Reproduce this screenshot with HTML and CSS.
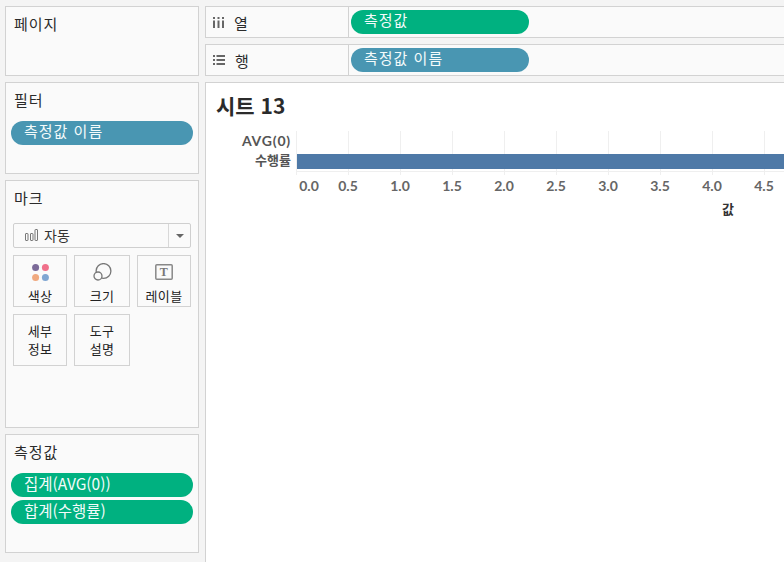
FILE: index.html
```html
<!DOCTYPE html>
<html lang="ko">
<head>
<meta charset="utf-8">
<title>시트 13</title>
<link rel="stylesheet" href="styles.css">
</head>
<body>
<div class="app">
  <aside class="side">
    <section class="card card-pages"><h2 class="card-title">페이지</h2></section>
    <section class="card card-filters">
      <h2 class="card-title">필터</h2>
      <div class="pill pill-blue pill-spaced">측정값 이름</div>
    </section>
    <section class="card card-marks">
      <h2 class="card-title">마크</h2>
      <div class="select">
        <div class="select-main">
          <svg class="select-icon" width="13" height="12" viewBox="0 0 13 12"><g fill="none" stroke="#777" stroke-width="1"><rect x="0.5" y="4.5" width="2.500" height="7" rx="0.500"/><rect x="5.500" y="4.500" width="2.500" height="7" rx="0.500"/><rect x="10" y="0.500" width="2.500" height="11" rx="0.500"/></g></svg>
          <span>자동</span>
        </div>
        <div class="select-arrow"><i class="caret"></i></div>
      </div>
      <div class="mark-grid">
        <div class="mark-btn">
          <svg class="mark-icon" width="17" height="17" viewBox="0 0 17 17"><circle cx="3.600" cy="3.600" r="3.500" fill="#7b6a98"/><circle cx="13.400" cy="3.600" r="3.500" fill="#f0708a"/><circle cx="3.600" cy="13.400" r="3.500" fill="#f0a97f"/><circle cx="13.400" cy="13.400" r="3.500" fill="#7fa6d2"/></svg>
          <span>색상</span>
        </div>
        <div class="mark-btn">
          <svg class="mark-icon mark-icon-size" width="19" height="18" viewBox="0 0 19 18"><g fill="none" stroke="#777" stroke-width="1.300"><circle cx="10.500" cy="8" r="7.400"/><circle cx="5" cy="13" r="4" fill="#fafafa"/></g></svg>
          <span>크기</span>
        </div>
        <div class="mark-btn">
          <svg class="mark-icon" width="18" height="16" viewBox="0 0 18 16"><rect x="0.800" y="0.800" width="16.400" height="14.400" rx="1" fill="none" stroke="#888" stroke-width="1.500"/><text class="t-glyph" x="9" y="12" text-anchor="middle">T</text></svg>
          <span>레이블</span>
        </div>
        <div class="mark-btn mark-text"><span>세부<br>정보</span></div>
        <div class="mark-btn mark-text"><span>도구<br>설명</span></div>
      </div>
    </section>
    <section class="card card-values">
      <h2 class="card-title">측정값</h2>
      <div class="pill-stack">
        <div class="pill pill-green">집계(AVG(0))</div>
        <div class="pill pill-green">합계(수행률)</div>
      </div>
    </section>
  </aside>
  <main class="main">
    <div class="shelf">
      <div class="shelf-label">
        <svg class="shelf-icon" width="11" height="11" viewBox="0 0 11 11"><g fill="#666"><rect x="0" y="0" width="2" height="2"/><rect x="4.500" y="0" width="2" height="2"/><rect x="9" y="0" width="2" height="2"/><rect x="0" y="3.500" width="2" height="7.500"/><rect x="4.500" y="3.500" width="2" height="7.500"/><rect x="9" y="3.500" width="2" height="7.500"/></g></svg>
        <span>열</span>
      </div>
      <div class="shelf-body"><div class="pill pill-green pill-spaced pill-shelf">측정값</div></div>
    </div>
    <div class="shelf">
      <div class="shelf-label">
        <svg class="shelf-icon" width="12" height="10" viewBox="0 0 12 10"><g fill="#666"><rect x="0" y="0" width="2" height="2"/><rect x="3.500" y="0" width="8.500" height="2"/><rect x="0" y="4" width="2" height="2"/><rect x="3.500" y="4" width="8.500" height="2"/><rect x="0" y="8" width="2" height="2"/><rect x="3.500" y="8" width="8.500" height="2"/></g></svg>
        <span>행</span>
      </div>
      <div class="shelf-body"><div class="pill pill-blue pill-spaced pill-shelf">측정값 이름</div></div>
    </div>
    <section class="sheet">
      <h1 class="sheet-title">시트 13</h1>
      <div class="chart">
        <div class="row-labels">
          <div class="row-label row-label-latin">AVG(0)</div>
          <div class="row-label">수행률</div>
        </div>
        <div class="plot">
          <div class="plot-area"><div class="bar"></div></div>
          <div class="axis">
            <span class="tick tick-first">0.0</span>
            <span class="tick">0.5</span>
            <span class="tick">1.0</span>
            <span class="tick">1.5</span>
            <span class="tick">2.0</span>
            <span class="tick">2.5</span>
            <span class="tick">3.0</span>
            <span class="tick">3.5</span>
            <span class="tick">4.0</span>
            <span class="tick">4.5</span>
          </div>
          <div class="axis-title">값</div>
        </div>
      </div>
    </section>
  </main>
</div>
</body>
</html>
```

FILE: styles.css
```css
* { box-sizing: border-box; }
html, body { margin: 0; padding: 0; height: 100%; overflow: hidden; }
body {
  background: #f4f4f4;
  color: #2b2b2b;
  font-family: "Noto Sans CJK KR", "Liberation Sans", sans-serif;
  font-size: 14px;
}
.app {
  display: flex;
  gap: 6px;
  height: 562px;
  padding: 6px 0 0 5px;
}
.side {
  width: 194px;
  flex: none;
  display: flex;
  flex-direction: column;
  gap: 6px;
  height: 547px;
}
.card {
  background: #fafafa;
  border: 1px solid #d2d2d2;
  padding: 0 5px;
}
.card-pages { height: 70px; }
.card-filters { height: 92px; }
.card-marks { height: 248px; }
.card-values { height: 119px; }
.card-title {
  margin: 0;
  padding: 7px 0 0 3px;
  font-size: 15px;
  letter-spacing: 1px;
  font-weight: 400;
  line-height: 20px;
  color: #2b2b2b;
}
.pill {
  height: 24px;
  border-radius: 12px;
  color: #f4fbfb;
  font-size: 15.500px;
  line-height: 21px;
  padding-left: 13px;
  white-space: nowrap;
}
.pill-spaced { font-size: 15px; letter-spacing: 1px; line-height: 20px; }
.pill-blue { background: #4996b2; }
.pill-green { background: #00b180; }
.card-filters .pill { margin-top: 11px; }
.pill-stack {
  display: flex;
  flex-direction: column;
  gap: 3px;
  margin-top: 11px;
}

.select {
  display: flex;
  height: 25px;
  margin: 15px 2px 0;
  border: 1px solid #cfcfcf;
  border-radius: 2px;
  background: #fafafa;
}
.select-main {
  flex: 1;
  display: flex;
  align-items: center;
  gap: 6px;
  padding: 0 0 1px 11px;
  font-size: 14px;
  color: #333;
}
.select-arrow {
  width: 22px;
  border-left: 1px solid #d8d8d8;
  display: flex;
  align-items: center;
  justify-content: center;
}
.caret {
  display: block;
  width: 0;
  height: 0;
  border-left: 4px solid transparent;
  border-right: 4px solid transparent;
  border-top: 4px solid #666;
}
.mark-grid {
  display: grid;
  grid-template-columns: 54px 56px 54px;
  grid-auto-rows: 52px;
  column-gap: 7px;
  row-gap: 7px;
  margin: 7px 2px 0;
}
.mark-btn {
  border: 1px solid #d2d2d2;
  background: #fafafa;
  display: flex;
  flex-direction: column;
  align-items: center;
  font-size: 13px;
  letter-spacing: 0.300px;
  line-height: 20px;
  color: #222;
}
.mark-icon { flex: none; margin-top: 8px; }
.mark-icon-size { margin-top: 7px; }
.mark-btn > span { margin-top: auto; }
.mark-text { justify-content: center; }
.mark-btn.mark-text > span { margin-top: 0; text-align: center; line-height: 18px; }
.t-glyph {
  font-family: "Liberation Serif", serif;
  font-size: 12px;
  font-weight: 700;
  fill: #777;
}

.main {
  flex: 1;
  min-width: 0;
  display: flex;
  flex-direction: column;
  gap: 6px;
}
.shelf {
  display: flex;
  height: 32px;
  flex: none;
  background: #fafafa;
  border: 1px solid #d2d2d2;
  border-right: 0;
}
.shelf-label {
  width: 143px;
  flex: none;
  display: flex;
  align-items: center;
  gap: 10px;
  padding-left: 7px;
  border-right: 1px solid #d2d2d2;
  font-size: 15px;
}
.shelf-icon { flex: none; }
.shelf-body {
  flex: 1;
  display: flex;
  align-items: center;
  padding-left: 2px;
}
.pill-shelf { width: 178px; }

.sheet {
  flex: 1;
  background: #fff;
  border: 1px solid #d2d2d2;
  border-right: 0;
  border-bottom: 0;
  padding-left: 10px;
  min-height: 0;
  overflow: hidden;
}
.sheet-title {
  margin: 0;
  padding-top: 7px;
  font-size: 21px;
  line-height: 30px;
  font-weight: 700;
  color: #2b2b2b;
}
.chart {
  display: flex;
  margin-top: 11px;
}
.row-labels {
  width: 80px;
  flex: none;
  padding-right: 5px;
}
.row-label {
  height: 19px;
  line-height: 19px;
  text-align: right;
  font-size: 13px;
  font-weight: 700;
  color: #555;
  white-space: nowrap;
}
.row-label-latin {
  font-family: "Lato", sans-serif;
  font-size: 14px;
  letter-spacing: 0.800px;
}
.plot { flex: 1; min-width: 0; }
.plot-area {
  position: relative;
  height: 44px;
  background-image: repeating-linear-gradient(to right, #efefef 0, #efefef 1px, transparent 1px, transparent 52px);
}
.bar {
  position: absolute;
  left: 1px;
  right: 0;
  top: 23px;
  height: 15px;
  background: #4e79a7;
}
.plot-area::after {
  content: "";
  position: absolute;
  left: 0;
  right: 0;
  top: 40px;
  height: 1px;
  background: #efefef;
}
.axis {
  display: flex;
  margin-left: -26px;
  height: 20px;
  margin-top: 1px;
}
.tick {
  width: 52px;
  flex: none;
  text-align: center;
  font-family: "Lato", sans-serif;
  font-size: 14px;
  font-weight: 700;
  line-height: 20px;
  color: #666;
}
.tick-first { padding-left: 26px; }
.axis-title {
  width: 60px;
  margin-left: 402px;
  margin-top: 5px;
  text-align: center;
  font-size: 13px;
  font-weight: 700;
  line-height: 16px;
  color: #333;
}
```
